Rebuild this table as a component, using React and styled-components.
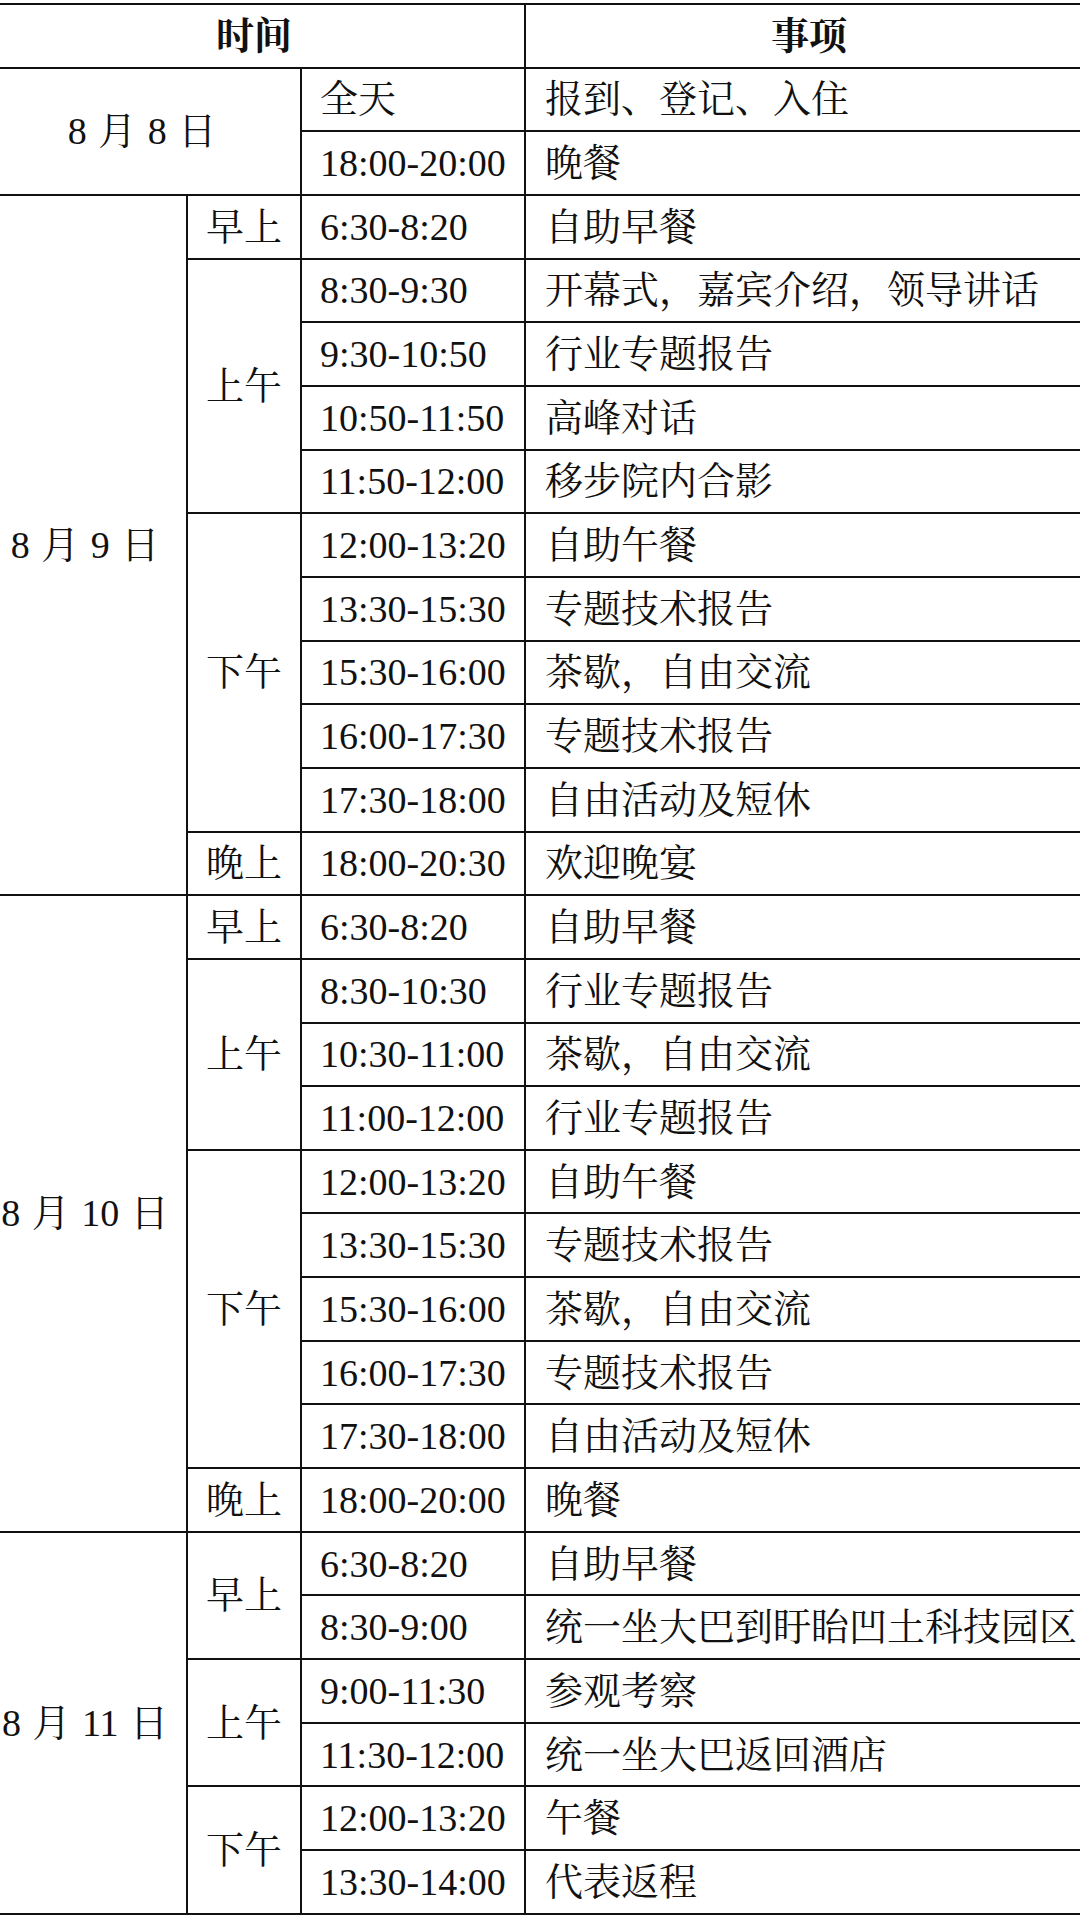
import styled, { createGlobalStyle } from "styled-components";

const GlobalStyle = createGlobalStyle`
  html, body {
    margin: 0;
    padding: 0;
    background: #fff;
    overflow: hidden;
  }
  body {
    font-family: "Liberation Serif", "Noto Serif CJK SC", "Noto Sans CJK SC", serif;
    color: #111;
  }
`

const Page = styled.div`
  width: 1080px;
  height: 1920px;
  padding-top: 3px;
  box-sizing: border-box;
  overflow: hidden;
`

const Table = styled.table`
  margin-left: -18px;
  width: 1110px;
  table-layout: fixed;
  border-collapse: collapse;
  font-size: 38px;

  td, th {
    border: 2px solid #111;
    height: 63.67px;
    padding: 0;
    line-height: 1;
    vertical-align: middle;
    box-sizing: border-box;
  }
`

const HeadCell = styled.th`
  font-weight: 700;
  text-align: center;
`

const DateCell = styled.td`
  text-align: center;
  word-spacing: 2px;
`

const PeriodCell = styled.td`
  text-align: center;
`

const TimeCell = styled.td`
  text-align: left;
  padding-left: 18px !important;
  white-space: nowrap;
`

const ItemCell = styled.td`
  text-align: left;
  padding-left: 19px !important;
  white-space: nowrap;
`

// 每天：日期 + 时段分组 + 具体安排
const days = [
  {
    date: "8 月 8 日",
    merged: true,
    slots: [
      ["全天", "报到、登记、入住"],
      ["18:00-20:00", "晚餐"],
    ],
  },
  {
    date: "8 月 9 日",
    groups: [
      { name: "早上", slots: [["6:30-8:20", "自助早餐"]] },
      {
        name: "上午",
        slots: [
          ["8:30-9:30", "开幕式，嘉宾介绍，领导讲话"],
          ["9:30-10:50", "行业专题报告"],
          ["10:50-11:50", "高峰对话"],
          ["11:50-12:00", "移步院内合影"],
        ],
      },
      {
        name: "下午",
        slots: [
          ["12:00-13:20", "自助午餐"],
          ["13:30-15:30", "专题技术报告"],
          ["15:30-16:00", "茶歇，自由交流"],
          ["16:00-17:30", "专题技术报告"],
          ["17:30-18:00", "自由活动及短休"],
        ],
      },
      { name: "晚上", slots: [["18:00-20:30", "欢迎晚宴"]] },
    ],
  },
  {
    date: "8 月 10 日",
    groups: [
      { name: "早上", slots: [["6:30-8:20", "自助早餐"]] },
      {
        name: "上午",
        slots: [
          ["8:30-10:30", "行业专题报告"],
          ["10:30-11:00", "茶歇，自由交流"],
          ["11:00-12:00", "行业专题报告"],
        ],
      },
      {
        name: "下午",
        slots: [
          ["12:00-13:20", "自助午餐"],
          ["13:30-15:30", "专题技术报告"],
          ["15:30-16:00", "茶歇，自由交流"],
          ["16:00-17:30", "专题技术报告"],
          ["17:30-18:00", "自由活动及短休"],
        ],
      },
      { name: "晚上", slots: [["18:00-20:00", "晚餐"]] },
    ],
  },
  {
    date: "8 月 11 日",
    groups: [
      {
        name: "早上",
        slots: [
          ["6:30-8:20", "自助早餐"],
          ["8:30-9:00", "统一坐大巴到盱眙凹土科技园区"],
        ],
      },
      {
        name: "上午",
        slots: [
          ["9:00-11:30", "参观考察"],
          ["11:30-12:00", "统一坐大巴返回酒店"],
        ],
      },
      {
        name: "下午",
        slots: [
          ["12:00-13:20", "午餐"],
          ["13:30-14:00", "代表返程"],
        ],
      },
    ],
  },
]

function DayRows({ day }) {
  if (day.merged) {
    return day.slots.map(([time, item], i) => (
      <tr key={time}>
        {i === 0 && (
          <DateCell colSpan={2} rowSpan={day.slots.length}>
            {day.date}
          </DateCell>
        )}
        <TimeCell>{time}</TimeCell>
        <ItemCell>{item}</ItemCell>
      </tr>
    ))
  }

  const total = day.groups.reduce((n, g) => n + g.slots.length, 0)
  const rows = []
  day.groups.forEach((group, gi) => {
    group.slots.forEach(([time, item], si) => {
      rows.push(
        <tr key={`${gi}-${si}`}>
          {gi === 0 && si === 0 && <DateCell rowSpan={total}>{day.date}</DateCell>}
          {si === 0 && <PeriodCell rowSpan={group.slots.length}>{group.name}</PeriodCell>}
          <TimeCell>{time}</TimeCell>
          <ItemCell>{item}</ItemCell>
        </tr>
      )
    })
  })
  return rows
}

export default function App() {
  return (
    <Page>
      <GlobalStyle />
      <Table>
        <colgroup>
          <col style={{ width: 204 }} />
          <col style={{ width: 114 }} />
          <col style={{ width: 224 }} />
          <col style={{ width: 568 }} />
        </colgroup>
        <thead>
          <tr>
            <HeadCell colSpan={3}>时间</HeadCell>
            <HeadCell>事项</HeadCell>
          </tr>
        </thead>
        <tbody>
          {days.map((day) => (
            <DayRows key={day.date} day={day} />
          ))}
        </tbody>
      </Table>
    </Page>
  )
}
